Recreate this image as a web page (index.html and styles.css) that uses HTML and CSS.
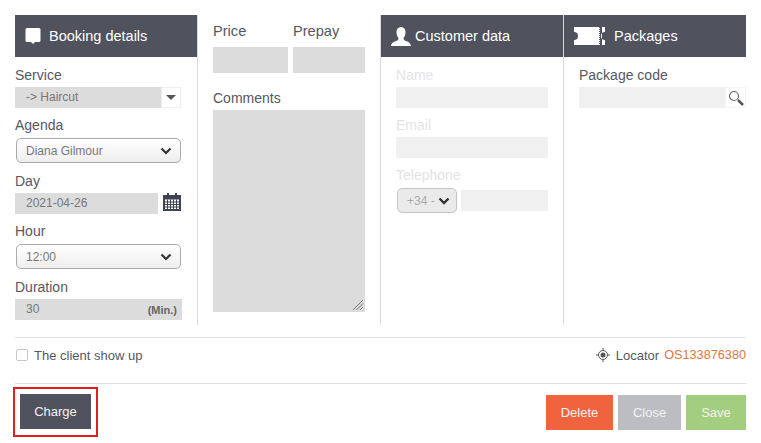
FILE: index.html
```html
<!DOCTYPE html>
<html lang="en">
<head>
<meta charset="utf-8">
<title>Booking</title>
<link rel="stylesheet" href="styles.css">
</head>
<body>
<div class="columns">
  <section class="col col-booking">
    <h2 class="head"><svg class="hicon" width="16" height="18" viewBox="0 0 16 18"><path fill="#fff" d="M2 1h12a1.500 1.500 0 0 1 1.500 1.500v11a1.500 1.500 0 0 1-1.500 1.500h-4l-2 2-2-2H2a1.500 1.500 0 0 1-1.500-1.500v-11A1.500 1.500 0 0 1 2 1z"/></svg>Booking details</h2>
    <div class="body">
      <label class="lab">Service</label>
      <div class="combo"><span class="val">-&gt; Haircut</span><span class="combo-btn"><svg width="10" height="5" viewBox="0 0 10 5"><path fill="#555" d="M0 0h10L5 5z"/></svg></span></div>
      <label class="lab lab-b">Agenda</label>
      <div class="sel"><span>Diana Gilmour</span><svg width="12" height="8" viewBox="0 0 12 8"><path fill="none" stroke="#333" stroke-width="2.200" d="M1.500 1.500 6 6l4.500-4.500"/></svg></div>
      <label class="lab lab-c">Day</label>
      <div class="day"><div class="field"><span class="val">2021-04-26</span></div>
        <svg width="18" height="18" viewBox="0 0 18 18"><path fill="#3f4250" d="M0 2h18v16H0zM4 0h2v3H4zM12 0h2v3h-2z"/><path fill="#fff" d="M2 6.500h14V16H2z"/><path stroke="#3f4250" stroke-width="1" d="M2 9h14M2 11.500h14M2 14h14M4.500 6.500V16M7.500 6.500V16M10.500 6.500V16M13.500 6.500V16"/></svg></div>
      <label class="lab lab-d">Hour</label>
      <div class="sel"><span>12:00</span><svg width="12" height="8" viewBox="0 0 12 8"><path fill="none" stroke="#333" stroke-width="2.200" d="M1.500 1.500 6 6l4.500-4.500"/></svg></div>
      <label class="lab lab-c">Duration</label>
      <div class="field duration"><span class="val">30</span><b class="min">(Min.)</b></div>
    </div>
  </section>
  <section class="col col-price">
    <div class="pair">
      <div><label class="lab">Price</label><div class="field tall"></div></div>
      <div><label class="lab">Prepay</label><div class="field tall"></div></div>
    </div>
    <label class="lab lab-comments">Comments</label>
    <div class="textarea"><svg class="grip" width="12" height="12" viewBox="0 0 12 12"><path stroke="#777" d="M11 1 1 11M11 4.500 4.500 11M11 8 8 11"/></svg></div>
  </section>
  <section class="col col-customer">
    <h2 class="head"><svg class="hicon person" width="20" height="19" viewBox="0 0 20 19"><path fill="#fff" d="M10 0c3 0 4.500 2.200 4.500 5s-1 5-2 6.200c0 1.500 1 2.200 3 3 2 .8 4 1.500 4.500 4.800H0c.5-3.300 2.500-4 4.500-4.800 2-.8 3-1.500 3-3C6.500 10 5.500 7.800 5.500 5S7 0 10 0z"/></svg>Customer data</h2>
    <div class="body inset">
      <label class="lab faint">Name</label>
      <div class="field pale"></div>
      <label class="lab faint lab-b2">Email</label>
      <div class="field pale"></div>
      <label class="lab faint lab-b2">Telephone</label>
      <div class="phone">
        <div class="prefix"><span>+34 -</span><svg width="12" height="8" viewBox="0 0 12 8"><path fill="none" stroke="#333" stroke-width="2.400" d="M1.500 1.500 6 6l4.500-4.500"/></svg></div>
        <div class="field pale grow"></div>
      </div>
    </div>
  </section>
  <section class="col col-packages">
    <h2 class="head head-pack"><svg class="hicon ticket" width="32" height="18" viewBox="0 0 32 18"><path fill="#fff" d="M0 0h26v18H0v-5a4 4 0 0 0 0-8zM28 0h3v5a4 4 0 0 0 0 8v5h-3z"/><path stroke="#50525e" stroke-dasharray="1 1" d="M25.500 0v18"/></svg>Packages</h2>
    <div class="body inset-left">
      <label class="lab">Package code</label>
      <div class="search"><div class="field pale grow"></div><span class="search-btn"><svg width="16" height="16" viewBox="0 0 16 16"><circle cx="6" cy="6" r="4.500" fill="#fff" stroke="#666" stroke-width="1.200"/><path stroke="#555" stroke-width="2.500" d="m10 10 5 5"/></svg></span></div>
    </div>
  </section>
</div>
<div class="status">
  <label class="check"><input type="checkbox"><span>The client show up</span></label>
  <div class="locator"><svg width="14" height="14" viewBox="0 0 14 14"><circle cx="7" cy="7" r="4.500" fill="none" stroke="#555"/><circle cx="7" cy="7" r="2.500" fill="#555"/><path stroke="#555" d="M7 0v2.500M7 11.500V14M0 7h2.500M11.500 7H14"/></svg><span>Locator</span><a class="code">OS133876380</a></div>
</div>
<div class="actions">
  <div class="highlight"><button class="btn charge">Charge</button></div>
  <div class="right">
    <button class="btn del">Delete</button>
    <button class="btn close">Close</button>
    <button class="btn save">Save</button>
  </div>
</div>
</body>
</html>
```
FILE: styles.css
```css
* { box-sizing: border-box; }
html, body { margin: 0; padding: 0; }
body {
  width: 761px;
  height: 443px;
  overflow: hidden;
  background: #fff;
  font-family: "Liberation Sans", Arial, sans-serif;
  color: #555761;
  padding: 15px 15px 0;
}
.columns {
  display: grid;
  grid-template-columns: 183px 183px 183px 182px;
  height: 310px;
}
.col { border-right: 1px solid #d9dadc; min-width: 0; }
.col-packages { border-right: 0; }
.head {
  margin: 0;
  height: 42px;
  background: #50525e;
  color: #fff;
  font-size: 14.5px;
  font-weight: 400;
  display: flex;
  align-items: center;
}
.col-booking .head { width: 182px; padding-left: 10px; }
.hicon { flex: none; margin-right: 8px; }
.col-customer .head { width: 182px; padding-left: 10px; }
.person { margin-right: 4px; }
.head-pack { padding-left: 10px; }
.ticket { margin-right: 8px; }
.body { padding-top: 10px; }
.inset { padding-left: 15px; padding-right: 15px; }
.inset-left { padding-left: 15px; }
.lab { display: block; font-size: 14px; line-height: 16px; height: 20px; }
.lab-b { height: 21px; margin-top: 9px; }
.lab-c { height: 20px; margin-top: 10px; }
.lab-d { height: 21px; margin-top: 9px; }
.lab-b2 { margin-top: 9px; }
.faint { color: #e4e4e6; }
.combo { display: flex; height: 21px; background: #dcdcdc; width: 166px; }
.val { display: block; font-size: 12px; color: #777; padding-left: 11px; line-height: 21px; }
.combo .val { flex: 1; }
.combo-btn {
  width: 20px;
  background: #fff;
  border: 1px solid #eee;
  display: flex;
  align-items: center;
  justify-content: center;
}
.sel {
  margin-left: 1px;
  width: 165px;
  height: 25px;
  border: 1px solid #aaa;
  border-radius: 5px;
  background: linear-gradient(#fff, #eee);
  display: flex;
  align-items: center;
  justify-content: space-between;
  padding: 0 8px 0 9px;
  font-size: 12px;
  color: #777;
}
.day { display: flex; align-items: flex-start; gap: 5px; }
.field { background: #dcdcdc; height: 21px; }
.day .field { width: 143px; }
.duration { display: flex; width: 167px; justify-content: space-between; align-items: center; }
.min { font-size: 11px; color: #666; padding-right: 5px; }
.col-price { padding: 8px 15px 0; }
.pair { display: flex; gap: 5px; }
.pair > div:first-child { width: 75px; }
.pair > div:last-child { width: 72px; }
.tall { height: 26px; }
.col-price .lab { height: 16px; margin-bottom: 8px; font-size: 14.6px; }
.col-price .lab-comments { font-size: 14px; margin-top: 17px; margin-bottom: 4px; }
.textarea { background: #dcdcdc; height: 202px; position: relative; }
.grip { position: absolute; right: 1px; bottom: 1px; }
.pale { background: #f0f0f0; }
.phone { display: flex; align-items: center; gap: 4px; padding-left: 1px; margin-top: 1px; }
.grow { flex: 1; }
.prefix {
  width: 60px;
  height: 25px;
  border: 1px solid #c4c4c4;
  border-radius: 5px;
  background: #eaeaea;
  display: flex;
  align-items: center;
  justify-content: space-between;
  padding: 0 6px 0 9px;
  font-size: 12px;
  color: #aaa;
}
.search { display: flex; height: 21px; }
.search-btn { width: 21px; display: flex; align-items: center; justify-content: center; border: 1px solid #f4f4f4; }
.status {
  margin-top: 12px;
  width: 731px;
  height: 47px;
  padding-bottom: 11px;
  border-top: 1px solid #e0e0e0;
  border-bottom: 1px solid #e0e0e0;
  display: flex;
  justify-content: space-between;
  align-items: center;
  font-size: 13px;
}
.check { display: flex; align-items: center; gap: 6px; }
.check input {
  appearance: none;
  margin: 0 0 0 1px;
  width: 12px;
  height: 12px;
  border: 1px solid #c8c8c8;
  border-radius: 2px;
  background: #fff;
}
.locator { display: flex; align-items: center; gap: 5px; }
.locator svg { margin-right: 1px; }
.code { color: #d9793f; font-size: 12.7px; }
.actions { display: flex; justify-content: space-between; align-items: center; width: 731px; margin-top: 3px; }
.highlight { border: 2px solid #e02020; padding: 5px; margin-left: -2px; height: 50px; }
.right { display: flex; gap: 5px; }
.btn { border: 0; height: 35px; color: #f2f2f2; font: 13px "Liberation Sans", Arial, sans-serif; padding: 0; }
.charge { width: 71px; background: #50525e; }
.del { width: 67px; background: #ef633f; }
.close { width: 63px; background: #bcbdc1; }
.save { width: 60px; background: #a3cd7f; }
```
